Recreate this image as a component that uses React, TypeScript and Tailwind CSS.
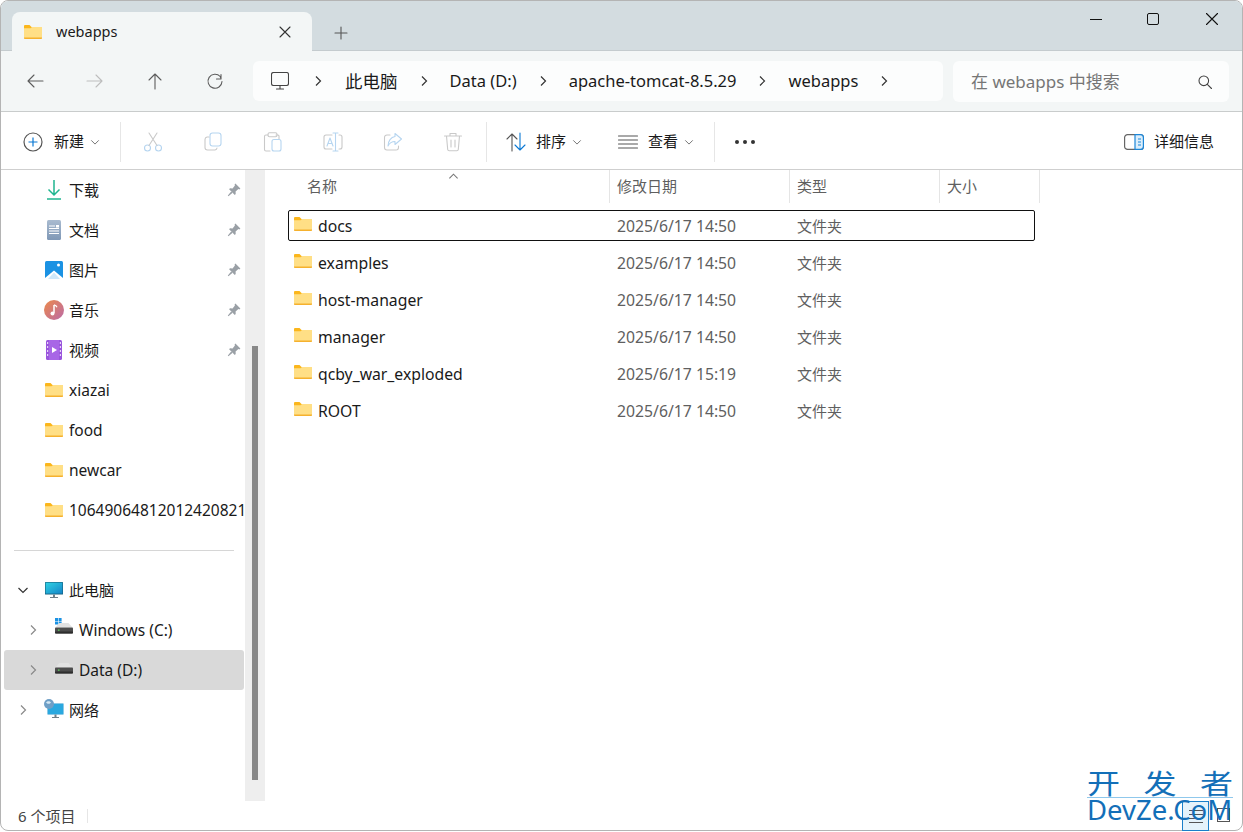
import React from "react";

const uiFont = { fontFamily: '"Noto Sans", "Noto Sans CJK SC", sans-serif' };

const FolderIcon = () => (
  <svg width="18" height="14" viewBox="0 0 18 14" className="shrink-0">
    <path d="M0 1a1 1 0 0 1 1-1h4.500l2 2H17a1 1 0 0 1 1 1v3H0z" fill="#fbb61c" />
    <path d="M0 3.200h6.600l1.400-1.200H18v11a1 1 0 0 1-1 1H1a1 1 0 0 1-1-1z" fill="#ffdf86" />
    <path d="M0 12.600h18V13a1 1 0 0 1-1 1H1a1 1 0 0 1-1-1z" fill="#f5b12e" />
  </svg>
);

const Chevron = ({ dir = "right", color = "#333", size = 12 }: { dir?: "right" | "down" | "up"; color?: string; size?: number }) => {
  const d = dir === "right" ? "M4 1.500 8.500 6 4 10.500" : dir === "down" ? "M1.500 4 6 8.500 10.500 4" : "M1.500 8 6 3.500 10.500 8";
  return (
    <svg width={size} height={size} viewBox="0 0 12 12" fill="none" stroke={color} strokeWidth="1.200" className="shrink-0">
      <path d={d} />
    </svg>
  );
};

const Stroke = ({ children, w = 20, h = 20, color = "#555" }: { children: React.ReactNode; w?: number; h?: number; color?: string }) => (
  <svg width={w} height={h} viewBox={`0 0 ${w} ${h}`} fill="none" stroke={color} strokeWidth="1.100" strokeLinecap="round" strokeLinejoin="round" className="shrink-0">
    {children}
  </svg>
);

const Divider = () => <div className="w-px h-10 bg-[#e6e6e6] shrink-0" />;

const ToolSlot = ({ children }: { children: React.ReactNode }) => (
  <div className="w-[60px] flex items-center justify-center shrink-0">{children}</div>
);

const Pin = () => (
  <svg width="14" height="14" viewBox="0 0 14 14" className="shrink-0" fill="#9aa0a6">
    <path d="M8.400.6 13.400 5.600 12.400 6.400 11.400 6.100 8.600 8.400 8.700 11 7.800 11.900 2.100 6.200 3 5.300 5.600 5.400 7.900 2.600 7.600 1.600z" />
    <path d="M4.200 8.400 5.600 9.800 1.400 13.200 0.800 12.600z" />
  </svg>
);

const DownloadIcon = () => (
  <svg width="14" height="20" viewBox="0 0 14 20" fill="none" stroke="#1fb58f" strokeWidth="1.500">
    <path d="M7 0v15M1.500 9.500 7 15l5.500-5.500" />
    <path d="M0 19h14" />
  </svg>
);

const DocIcon = () => (
  <svg width="14" height="20" viewBox="0 0 14 20">
    <defs>
      <linearGradient id="doc" x1="0" y1="0" x2="0" y2="1">
        <stop offset="0" stopColor="#a9bbd0" />
        <stop offset="1" stopColor="#7f98b6" />
      </linearGradient>
    </defs>
    <rect width="14" height="20" rx="1.500" fill="url(#doc)" />
    <path d="M2 6h6M2 8.500h10M2 11h10M2 13.500h10" stroke="#fff" strokeWidth="1" />
    <rect x="9" y="5" width="3" height="2.500" fill="#fff" />
  </svg>
);

const PictureIcon = () => (
  <svg width="18" height="18" viewBox="0 0 18 18">
    <rect width="18" height="18" rx="1.500" fill="#1b92e3" />
    <circle cx="13.500" cy="4" r="1.500" fill="#fff" />
    <path d="M0 17 9 9.500 18 17v1H0z" fill="#fff" />
    <path d="M9 11.500 15 18H3z" fill="#cfe8fa" />
  </svg>
);

const MusicIcon = () => (
  <svg width="20" height="20" viewBox="0 0 20 20">
    <defs>
      <linearGradient id="music" x1="0" y1="0" x2="1" y2="1">
        <stop offset="0" stopColor="#ec8a4a" />
        <stop offset="1" stopColor="#bb6aa8" />
      </linearGradient>
    </defs>
    <circle cx="10" cy="10" r="10" fill="url(#music)" />
    <path d="M10 5v8" stroke="#fff" strokeWidth="1.500" />
    <path d="M10 4.800c1 .2 2.500 1 3 2.500" stroke="#fff" strokeWidth="1.200" fill="none" />
    <circle cx="8.500" cy="13.500" r="2" fill="#fff" />
  </svg>
);

const VideoIcon = () => (
  <svg width="16" height="20" viewBox="0 0 16 20">
    <rect width="16" height="20" rx="1.500" fill="#9a55dd" />
    <rect x="3" y="0" width="10" height="20" fill="#a866e6" />
    <path d="M6 7v6l5-3z" fill="#fff" />
    <path d="M1 3h1.200M1 7h1.200M1 11h1.200M1 15h1.200M13.800 3H15M13.800 7H15M13.800 11H15M13.800 15H15" stroke="#fff" strokeWidth="1.400" />
  </svg>
);

const PcIcon = () => (
  <svg width="18" height="16" viewBox="0 0 18 16">
    <defs>
      <linearGradient id="pc" x1="0" y1="0" x2="1" y2="1">
        <stop offset="0" stopColor="#2fd2e3" />
        <stop offset="1" stopColor="#1585c8" />
      </linearGradient>
    </defs>
    <rect width="18" height="12.500" fill="#14607f" rx="0.500" />
    <rect x="0.600" y="0.600" width="16.800" height="11" fill="url(#pc)" />
    <path d="M8 12.500h2V15H8zM5 15h8v1H5z" fill="#6f7f88" />
  </svg>
);

const DriveIcon = ({ windows }: { windows?: boolean }) => (
  <svg width="18" height="18" viewBox="0 0 18 18">
    {windows && <path d="M0 0h3v3H0zM3.600 0h3v3h-3zM0 3.600h3v3H0zM3.600 3.600h3v3h-3z" fill="#1b92e3" />}
    <path d="M3 6.500 4.500 5H13.500L17.500 9.500H.5z" fill="#e2e2e2" />
    <rect y="9.500" width="18" height="6" rx="0.800" fill="#4d4d4d" />
    <rect y="13.500" width="18" height="2" rx="0.800" fill="#2e2e2e" />
    <rect x="3" y="11.500" width="1.500" height="1.200" fill="#5ee05e" />
  </svg>
);

const NetIcon = () => (
  <svg width="20" height="20" viewBox="0 0 20 20">
    <rect x="3.500" y="4.500" width="16" height="11" fill="#1a93cf" />
    <rect x="4" y="5" width="15" height="10" fill="#2aa8df" />
    <path d="M10.500 15.500h2V18h-2zM8 18h7v1H8z" fill="#6f7f88" />
    <circle cx="5" cy="5" r="5" fill="#6f9fc6" />
    <path d="M2 3.500C3.500 1.500 6 2 7 3.500 6 5 3.500 5.500 2 3.500z" fill="#d5e7f3" />
  </svg>
);

type NavRow = { label: string; icon?: React.ReactNode; pinned?: boolean; latin?: boolean };

const quickRows: NavRow[] = [
  { label: "下载", icon: <DownloadIcon />, pinned: true },
  { label: "文档", icon: <DocIcon />, pinned: true },
  { label: "图片", icon: <PictureIcon />, pinned: true },
  { label: "音乐", icon: <MusicIcon />, pinned: true },
  { label: "视频", icon: <VideoIcon />, pinned: true },
  { label: "xiazai", icon: <FolderIcon />, latin: true },
  { label: "food", icon: <FolderIcon />, latin: true },
  { label: "newcar", icon: <FolderIcon />, latin: true },
  { label: "10649064812012420821", icon: <FolderIcon />, latin: true },
];

const SidebarRow = ({ label, icon, pinned, latin }: NavRow) => (
  <div className={"h-10 flex items-center pl-[43px] " + (pinned ? "pr-[4px]" : "")}>
    <div className="w-5 flex justify-center shrink-0">{icon}</div>
    <span className={"ml-[5px] text-[#1a1a1a] whitespace-nowrap overflow-hidden flex-1 " + (latin ? "pt-[2px] text-[15.500px]" : "text-[15px]")}>{label}</span>
    {pinned && <Pin />}
  </div>
);

const files = [
  { name: "docs", date: "2025/6/17 14:50" },
  { name: "examples", date: "2025/6/17 14:50" },
  { name: "host-manager", date: "2025/6/17 14:50" },
  { name: "manager", date: "2025/6/17 14:50" },
  { name: "qcby_war_exploded", date: "2025/6/17 15:19" },
  { name: "ROOT", date: "2025/6/17 14:50" },
];

const FileRow = ({ name, date, focused }: { name: string; date: string; focused?: boolean }) => (
  <div className={"h-[31px] mb-[6px] flex items-center rounded-[2px] w-[747px] border " + (focused ? "border-[#111]" : "border-transparent")}>
    <div className="ml-[5px] -mt-[3px]"><FolderIcon /></div>
    <span className="ml-[6px] pt-[2px] w-[299px] text-[15.750px] text-[#1a1a1a]">{name}</span>
    <span className="pt-[2px] w-[180px] text-[15.750px] text-[#5f5f5f]">{date}</span>
    <span className="pt-[2px] text-[15px] text-[#5f5f5f]">文件夹</span>
  </div>
);

const HeaderCell = ({ label, className }: { label: string; className: string }) => (
  <div className={"h-[33px] border-r border-[#e5e5e5] flex items-center text-[15px] text-[#5f5f5f] " + className}>{label}</div>
);

export default function App() {
  return (
    <div className="w-[1243px] h-[832px] bg-white relative overflow-hidden" style={uiFont}>
      <div className="w-full h-[831px] flex flex-col border border-[#b4b4b4] rounded-lg overflow-hidden bg-white">
        {/* title bar */}
        <div className="h-[50px] shrink-0 bg-[#d3dce0] border-b border-[#c4cbce] flex pl-[11px] relative">
          <div className="w-[300px] h-[39px] mt-[11px] bg-[#f3f6f6] rounded-t-lg flex items-center pl-3 pr-[21px] relative z-10">
            <FolderIcon />
            <span className="ml-[14px] text-[14.500px] text-[#1a1a1a] flex-1">webapps</span>
            <Stroke w={12} h={12} color="#333">
              <path d="M1 1l10 10M11 1 1 11" />
            </Stroke>
          </div>
          <div className="ml-[22px] mt-[25px]">
            <Stroke w={14} h={14} color="#555">
              <path d="M7 1v12M1 7h12" />
            </Stroke>
          </div>
          <div className="ml-auto flex items-start pt-[12px] pr-[24px]">
            <div className="mt-[6px] w-3 h-px bg-[#111]" />
            <div className="ml-[45px] w-[12px] h-[12px] border border-[#111] rounded-[2px]" />
            <div className="ml-[47px]">
              <Stroke w={12} h={12} color="#111"><path d="M0.500 0.500l11 11M11.500 0.500l-11 11" /></Stroke>
            </div>
          </div>
        </div>

        {/* address bar */}
        <div className="h-[61px] shrink-0 bg-[#f3f6f6] border-b border-[#c9cccc] flex items-start pt-[10px]">
          <div className="flex items-center h-10 shrink-0">
            <div className="w-[252px] pl-[24px] flex items-center gap-[40px]">
              <Stroke color="#5c5c5c"><path d="M18 10H3M9 4l-6 6 6 6" /></Stroke>
              <Stroke color="#bdbdbd"><path d="M2 10h15M11 4l6 6-6 6" /></Stroke>
              <Stroke color="#5c5c5c"><path d="M10 18V3M4 9l6-6 6 6" /></Stroke>
              <Stroke color="#5c5c5c"><path d="M16 3.500v4.500h-4.500M17 10.500a7 7 0 1 1-1.800-5L16 7.500" /></Stroke>
            </div>
          </div>
          <div className="w-[690px] h-10 bg-[#fcfdfd] rounded-md flex items-center shrink-0 pl-[18px]">
            <Stroke w={18} h={18} color="#444">
              <rect x="0.500" y="0.500" width="17" height="13" rx="2" />
              <path d="M9 14v3M5.500 17h7" />
            </Stroke>
            <span className="ml-[23px]"><Chevron /></span>
            <span className="ml-[21px] text-[17.500px] text-[#1a1a1a]">此电脑</span>
            <span className="ml-[20px]"><Chevron /></span>
            <span className="ml-[20px] text-[16.500px] text-[#1a1a1a]">Data (D:)</span>
            <span className="ml-[20px]"><Chevron /></span>
            <span className="ml-[20px] text-[16.500px] text-[#1a1a1a]">apache-tomcat-8.5.29</span>
            <span className="ml-[20px]"><Chevron /></span>
            <span className="ml-[20px] text-[16.500px] text-[#1a1a1a]">webapps</span>
            <span className="ml-[20px]"><Chevron /></span>
          </div>
          <div className="ml-[10px] w-[276px] h-[41px] bg-[#fcfdfd] rounded-md flex items-center pl-[18px] pr-[17px] shrink-0">
            <span className="flex-1 text-[17px] text-[#767676]">在 webapps 中搜索</span>
            <Stroke w={14} h={14} color="#444">
              <circle cx="5.800" cy="5.800" r="4.800" />
              <path d="M9.300 9.300 13.500 13.500" />
            </Stroke>
          </div>
        </div>

        {/* command bar */}
        <div className="h-[58px] shrink-0 border-b border-[#cfcfcf] flex items-center pt-[2px] pl-[22px] text-[15px] text-[#1a1a1a]">
          <svg width="20" height="20" viewBox="0 0 20 20" fill="none" className="shrink-0">
            <circle cx="10" cy="10" r="9" stroke="#555" strokeWidth="1.200" />
            <path d="M10 5.500v9M5.500 10h9" stroke="#0a78d4" strokeWidth="1.200" />
          </svg>
          <span className="ml-[11px]">新建</span>
          <span className="ml-[6px]"><Chevron dir="down" color="#777" size={10} /></span>
          <div className="ml-[20px]"><Divider /></div>
          <div className="flex items-center ml-[2px]">
            <ToolSlot>
              <Stroke color="#b6d5f0">
                <circle cx="4.500" cy="16" r="3" /><circle cx="15.500" cy="16" r="3" />
                <path d="M6 13.500 14 1M14 13.500 6 1" stroke="#c9c9c9" />
              </Stroke>
            </ToolSlot>
            <ToolSlot>
              <Stroke color="#c9c9c9">
                <rect x="7" y="1" width="11" height="13" rx="2.500" stroke="#b6d5f0" />
                <path d="M6 5H4a2.500 2.500 0 0 0-2 2.500v8A2.500 2.500 0 0 0 4.500 18H12a2.500 2.500 0 0 0 2-2" />
              </Stroke>
            </ToolSlot>
            <ToolSlot>
              <Stroke color="#c9c9c9">
                <path d="M5 3H3a1.500 1.500 0 0 0-1.500 1.500v13A1.500 1.500 0 0 0 3 19h4M13 3h2a1.500 1.500 0 0 1 1 1v3" />
                <rect x="5" y="0.800" width="9" height="4" rx="1.500" />
                <rect x="9" y="7.500" width="9" height="11.500" rx="2" stroke="#b6d5f0" />
              </Stroke>
            </ToolSlot>
            <ToolSlot>
              <Stroke color="#c9c9c9">
                <path d="M9 3H3a2 2 0 0 0-2 2v10a2 2 0 0 0 2 2h6M16 3h1a2 2 0 0 1 2 2v10a2 2 0 0 1-2 2h-1" />
                <path d="M10 1h5M10 19h5M12.500 1v18" stroke="#b6d5f0" />
                <path d="M4 14 7 6l3 8M5 11.500h4" stroke="#b6d5f0" />
              </Stroke>
            </ToolSlot>
            <ToolSlot>
              <Stroke color="#c9c9c9">
                <path d="M7 3H4a2.500 2.500 0 0 0-2.500 2.500v10A2.500 2.500 0 0 0 4 18h9a2.500 2.500 0 0 0 2.500-2.500V14" />
                <path d="M12 1.500 18.500 7 12 12.500V9.500C9 9.500 6.500 11 5 14c0-5 3-9 7-9.500z" stroke="#b6d5f0" />
              </Stroke>
            </ToolSlot>
            <ToolSlot>
              <Stroke color="#c9c9c9">
                <path d="M1.500 4h17M7 4V1.500h6V4M3.500 4l1.200 13.500a1.500 1.500 0 0 0 1.500 1.300h7.600a1.500 1.500 0 0 0 1.500-1.300L16.500 4M8 8v7M12 8v7" />
              </Stroke>
            </ToolSlot>
          </div>
          <div className="ml-[3px]"><Divider /></div>
          <div className="ml-[19px]">
            <Stroke color="#555">
              <path d="M6 19V2M1 7l5-5 5 5" />
              <path d="M14 1v17M9 13l5 5 5-5" stroke="#0a78d4" />
            </Stroke>
          </div>
          <span className="ml-[10px]">排序</span>
          <span className="ml-[6px]"><Chevron dir="down" color="#777" size={10} /></span>
          <div className="ml-[36px]">
            <Stroke color="#555">
              <path d="M0.500 4h19M0.500 8h19M0.500 12h19M0.500 16h19" />
            </Stroke>
          </div>
          <span className="ml-[10px]">查看</span>
          <span className="ml-[6px]"><Chevron dir="down" color="#777" size={10} /></span>
          <div className="ml-[20px]"><Divider /></div>
          <div className="ml-[20px] flex gap-[4px]">
            <span className="w-[4px] h-[4px] rounded-full bg-[#333]" />
            <span className="w-[4px] h-[4px] rounded-full bg-[#333]" />
            <span className="w-[4px] h-[4px] rounded-full bg-[#333]" />
          </div>
          <div className="ml-auto flex items-center pr-[28px]">
            <svg width="20" height="16" viewBox="0 0 20 16" fill="none" className="shrink-0">
              <rect x="0.600" y="0.600" width="18.800" height="14.800" rx="3" stroke="#666" strokeWidth="1.200" />
              <path d="M11 0.600h5.400a3 3 0 0 1 3 3v8.800a3 3 0 0 1-3 3H11z" fill="#dceefb" stroke="#1b86d8" strokeWidth="1.200" />
              <path d="M14 5h3M14 8h3M14 11h3" stroke="#1b86d8" strokeWidth="1.200" />
            </svg>
            <span className="ml-[10px]">详细信息</span>
          </div>
        </div>

        {/* body */}
        <div className="flex-1 flex min-h-0">
          <div className="w-[244px] shrink-0 overflow-hidden">
            {quickRows.map((r) => <SidebarRow key={r.label} {...r} />)}
            <div className="h-10 flex items-center pl-[13px]"><div className="w-[220px] h-px bg-[#d6d6d6]" /></div>
            <div className="h-10 flex items-center pl-[16px]">
              <Chevron dir="down" color="#333" />
              <div className="ml-[15px] w-5 flex justify-center"><PcIcon /></div>
              <span className="ml-[5px] text-[15px] text-[#1a1a1a]">此电脑</span>
            </div>
            <div className="h-10 flex items-center pl-[26px]">
              <Chevron color="#8a8a8a" />
              <div className="ml-[16px] -mt-[6px]"><DriveIcon windows /></div>
              <span className="ml-[6px] pt-[2px] text-[15.500px] text-[#1a1a1a]">Windows (C:)</span>
            </div>
            <div className="h-10 ml-[3px] mr-px rounded-[3px] bg-[#d9d9d9] flex items-center pl-[23px]">
              <Chevron color="#8a8a8a" />
              <div className="ml-[16px] -mt-[6px]"><DriveIcon /></div>
              <span className="ml-[6px] pt-[2px] text-[15.500px] text-[#1a1a1a]">Data (D:)</span>
            </div>
            <div className="h-10 flex items-center pl-[16px]">
              <Chevron color="#8a8a8a" />
              <div className="ml-[15px] -mt-[2px]"><NetIcon /></div>
              <span className="ml-[5px] text-[15px] text-[#1a1a1a]">网络</span>
            </div>
          </div>

          <div className="w-5 shrink-0 bg-[#eeeeee] pl-[7px] pt-[176px] pb-[21px]">
            <div className="w-[6px] h-full bg-[#888888]" />
          </div>

          <div className="flex-1 min-w-0 relative">
            <div className="flex h-[33px] pl-[42px]">
              <HeaderCell label="名称" className="w-[303px]" />
              <HeaderCell label="修改日期" className="w-[180px] pl-[7px]" />
              <HeaderCell label="类型" className="w-[150px] pl-[7px]" />
              <HeaderCell label="大小" className="w-[100px] pl-[7px]" />
            </div>
            <div className="absolute left-[183px] top-[1px]"><Chevron dir="up" color="#777" size={11} /></div>
            <div className="pl-[23px] pt-[7px]">
              {files.map((f, i) => <FileRow key={f.name} name={f.name} date={f.date} focused={i === 0} />)}
            </div>
          </div>
        </div>

        {/* status bar */}
        <div className="h-[29px] shrink-0 flex items-center pl-[17px] text-[15px] text-[#444]">
          <span className="pt-[2px]">6 个项目</span>
          <div className="ml-[12px] w-px h-[14px] bg-[#e6e6e6]" />
        </div>
      </div>

      {/* list / tile view toggles */}
      <div className="absolute left-[1182px] top-[801px] w-[27px] h-[30px] bg-[#e5f3fb] border border-[#1a7fc9] flex flex-col items-center justify-center gap-[3px]">
        <div className="w-[14px] h-px bg-[#555]" />
        <div className="w-[14px] h-px bg-[#555]" />
        <div className="w-[14px] h-px bg-[#555]" />
        <div className="w-[14px] h-px bg-[#555]" />
      </div>
      <div className="absolute left-[1217px] top-[808px] w-[13px] h-[14px] border border-[#555]" />
      {/* DevZe watermark over the corner */}
      <div className="absolute left-[1087px] top-[762px] w-[146px] text-[#136fb8]">
        <div className="h-[35px] flex justify-between text-[33px] leading-[35px] origin-bottom scale-y-[0.82]" style={{ fontFamily: '"Noto Sans CJK SC", sans-serif' }}>
          <span>开</span><span>发</span><span>者</span>
        </div>
        <div className="h-px bg-[#8fc8ec]" />
        <div className="text-[27.500px] leading-[24px] whitespace-nowrap" style={{ fontFamily: '"Noto Sans", sans-serif' }}>DevZe.CoM</div>
      </div>
    </div>
  );
}
